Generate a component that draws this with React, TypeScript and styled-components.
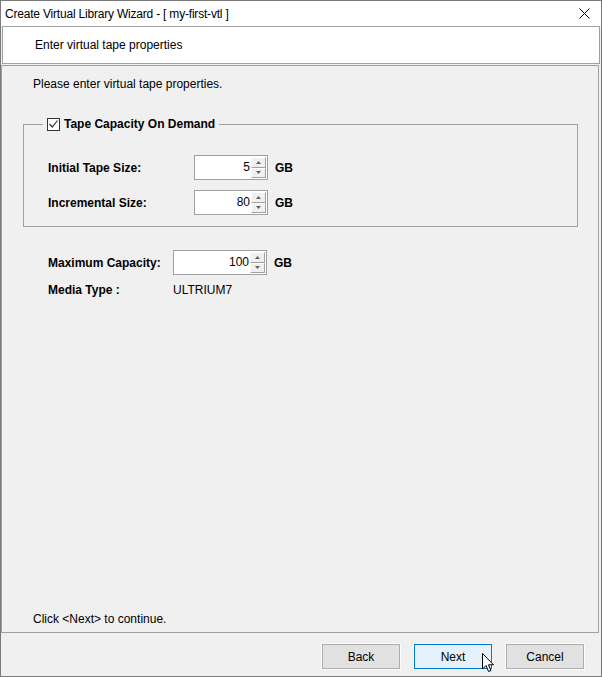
import React from "react";
import styled, { createGlobalStyle } from "styled-components";

const GlobalStyle = createGlobalStyle`
  html, body {
    margin: 0;
    padding: 0;
    background: #f0f0f0;
  }
  body {
    font-family: "Liberation Sans", Arial, sans-serif;
    font-size: 12px;
    color: #000;
  }
`;

const StyledWindow = styled.div`
  width: 602px;
  height: 677px;
  box-sizing: border-box;
  border: 1px solid #7a7a7a;
  background: #f0f0f0;
  display: flex;
  flex-direction: column;
`;

const StyledTitleBar = styled.div`
  height: 25px;
  flex-shrink: 0;
  background: #fff;
  display: flex;
  align-items: center;
  justify-content: space-between;
  padding: 0 11px 0 4px;
  font-size: 12px;
  letter-spacing: -0.2px;
`;

const StyledHeader = styled.div`
  height: 36px;
  flex-shrink: 0;
  margin: 0 1px;
  background: #fff;
  border: 1px solid #a0a0a0;
  display: flex;
  align-items: center;
  padding-left: 32px;
`;

const StyledPanel = styled.div`
  flex: 1;
  margin: 1px 2px 0 0;
  border: 1px solid #a0a0a0;
  display: flex;
  flex-direction: column;
  padding: 11px 20px 6px 21px;
`;

const StyledText = styled.div`
  padding-left: 10px;
  line-height: 14px;
`;

const StyledGroup = styled.fieldset`
  margin: 26px 0 0 0;
  padding: 0 0 11px 0;
  border: 1px solid #a0a0a0;
  min-width: 0;
`;

const StyledLegend = styled.legend`
  margin-left: 19px;
  padding: 0 4px;
  display: flex;
  align-items: center;
  gap: 4px;
  font-weight: bold;
  line-height: 14px;
`;

const StyledCheckbox = styled.span`
  width: 11px;
  height: 11px;
  border: 1px solid #333;
  background: #fff;
  display: inline-flex;
  align-items: center;
  justify-content: center;
`;

const StyledRows = styled.div<{ $top: number; $left: number }>`
  display: flex;
  flex-direction: column;
  gap: 10px;
  padding-top: ${(p) => p.$top}px;
  padding-left: ${(p) => p.$left}px;
`;

const StyledRow = styled.div<{ $labelWidth: number }>`
  display: grid;
  grid-template-columns: ${(p) => p.$labelWidth}px auto auto;
  align-items: center;
  justify-content: start;
  column-gap: 7px;
`;

const StyledLabel = styled.div`
  font-weight: bold;
`;

const StyledUnit = styled.div`
  font-weight: bold;
`;

const StyledSpinner = styled.div<{ $width: number }>`
  width: ${(p) => p.$width}px;
  height: 25px;
  box-sizing: border-box;
  border: 1px solid #a0a0a0;
  background: #fff;
  display: flex;
  padding: 1px;
`;

const StyledSpinnerValue = styled.div`
  flex: 1;
  text-align: right;
  line-height: 21px;
  padding-right: 1px;
`;

const StyledSpinnerButtons = styled.div`
  width: 15px;
  display: flex;
  flex-direction: column;
`;

const StyledSpinnerButton = styled.div`
  flex: 1;
  background: #f0f0f0;
  border-top: 1px solid #fff;
  border-left: 1px solid #fff;
  border-right: 1px solid #a0a0a0;
  border-bottom: 1px solid #a0a0a0;
  display: flex;
  align-items: center;
  justify-content: center;
`;

const StyledMedia = styled.div`
  display: grid;
  grid-template-columns: 125px auto;
  margin-top: 8px;
  padding-left: 25px;
`;

const StyledSpacer = styled.div`
  flex: 1;
`;

const StyledFooter = styled.div`
  height: 43px;
  flex-shrink: 0;
  display: flex;
  justify-content: flex-end;
  align-items: flex-start;
  gap: 14px;
  padding: 11px 17px 0 0;
  box-sizing: border-box;
`;

const StyledButton = styled.div<{ $focused?: boolean }>`
  position: relative;
  width: 78px;
  height: 25px;
  box-sizing: border-box;
  border: 1px solid ${(p) => (p.$focused ? "#0078d7" : "#adadad")};
  background: ${(p) => (p.$focused ? "#e5f1fb" : "#e1e1e1")};
  box-shadow: 0 0 0 1px #fbfbfb, inset 0 0 0 1px ${(p) => (p.$focused ? "#e5f1fb" : "#e1e1e1")};
  display: flex;
  align-items: center;
  justify-content: center;
`;

const StyledCursor = styled.svg`
  position: absolute;
  left: 67px;
  top: 8px;
`;

const Arrow = ({ up }: { up: boolean }) => (
  <svg width="5" height="3" viewBox="0 0 5 3">
    <path d={up ? "M2.5 0 L5 3 L0 3 Z" : "M0 0 L5 0 L2.5 3 Z"} fill="#606060" />
  </svg>
);

type SpinnerProps = { value: string; width: number };

const Spinner = ({ value, width }: SpinnerProps) => (
  <StyledSpinner $width={width}>
    <StyledSpinnerValue>{value}</StyledSpinnerValue>
    <StyledSpinnerButtons>
      <StyledSpinnerButton>
        <Arrow up />
      </StyledSpinnerButton>
      <StyledSpinnerButton>
        <Arrow up={false} />
      </StyledSpinnerButton>
    </StyledSpinnerButtons>
  </StyledSpinner>
);

const App = () => {
  return (
    <>
      <GlobalStyle />
      <StyledWindow>
        <StyledTitleBar>
          <span>Create Virtual Library Wizard - [ my-first-vtl ]</span>
          <svg width="11" height="11" viewBox="0 0 11 11">
            <path d="M0.5 0.5 L10.5 10.5 M10.5 0.5 L0.5 10.5" stroke="#000" strokeWidth="1" />
          </svg>
        </StyledTitleBar>
        <StyledHeader>Enter virtual tape properties</StyledHeader>
        <StyledPanel>
          <StyledText>Please enter virtual tape properties.</StyledText>
          <StyledGroup>
            <StyledLegend>
              <StyledCheckbox>
                <svg width="9" height="8" viewBox="0 0 9 8">
                  <path d="M0.5 4 L3.3 7 L8.5 0.5" stroke="#333" strokeWidth="1.2" fill="none" />
                </svg>
              </StyledCheckbox>
              Tape Capacity On Demand
            </StyledLegend>
            <StyledRows $top={24} $left={24}>
              <StyledRow $labelWidth={139}>
                <StyledLabel>Initial Tape Size:</StyledLabel>
                <Spinner value="5" width={74} />
                <StyledUnit>GB</StyledUnit>
              </StyledRow>
              <StyledRow $labelWidth={139}>
                <StyledLabel>Incremental Size:</StyledLabel>
                <Spinner value="80" width={74} />
                <StyledUnit>GB</StyledUnit>
              </StyledRow>
            </StyledRows>
          </StyledGroup>
          <StyledRows $top={23} $left={25}>
            <StyledRow $labelWidth={118}>
              <StyledLabel>Maximum Capacity:</StyledLabel>
              <Spinner value="100" width={94} />
              <StyledUnit>GB</StyledUnit>
            </StyledRow>
          </StyledRows>
          <StyledMedia>
            <StyledLabel>Media Type :</StyledLabel>
            <div>ULTRIUM7</div>
          </StyledMedia>
          <StyledSpacer />
          <StyledText>Click &lt;Next&gt; to continue.</StyledText>
        </StyledPanel>
        <StyledFooter>
          <StyledButton>Back</StyledButton>
          <StyledButton $focused>
            Next
            <StyledCursor width="13" height="20" viewBox="0 0 13 20">
              <path
                d="M0.5 0.5 L0.5 16 L4 12.5 L6.5 18.5 L9 17.5 L6.5 11.8 L11.5 11.8 Z"
                fill="#fff"
                stroke="#000"
                strokeWidth="1"
                strokeLinejoin="miter"
              />
            </StyledCursor>
          </StyledButton>
          <StyledButton>Cancel</StyledButton>
        </StyledFooter>
      </StyledWindow>
    </>
  );
};

export default App;
